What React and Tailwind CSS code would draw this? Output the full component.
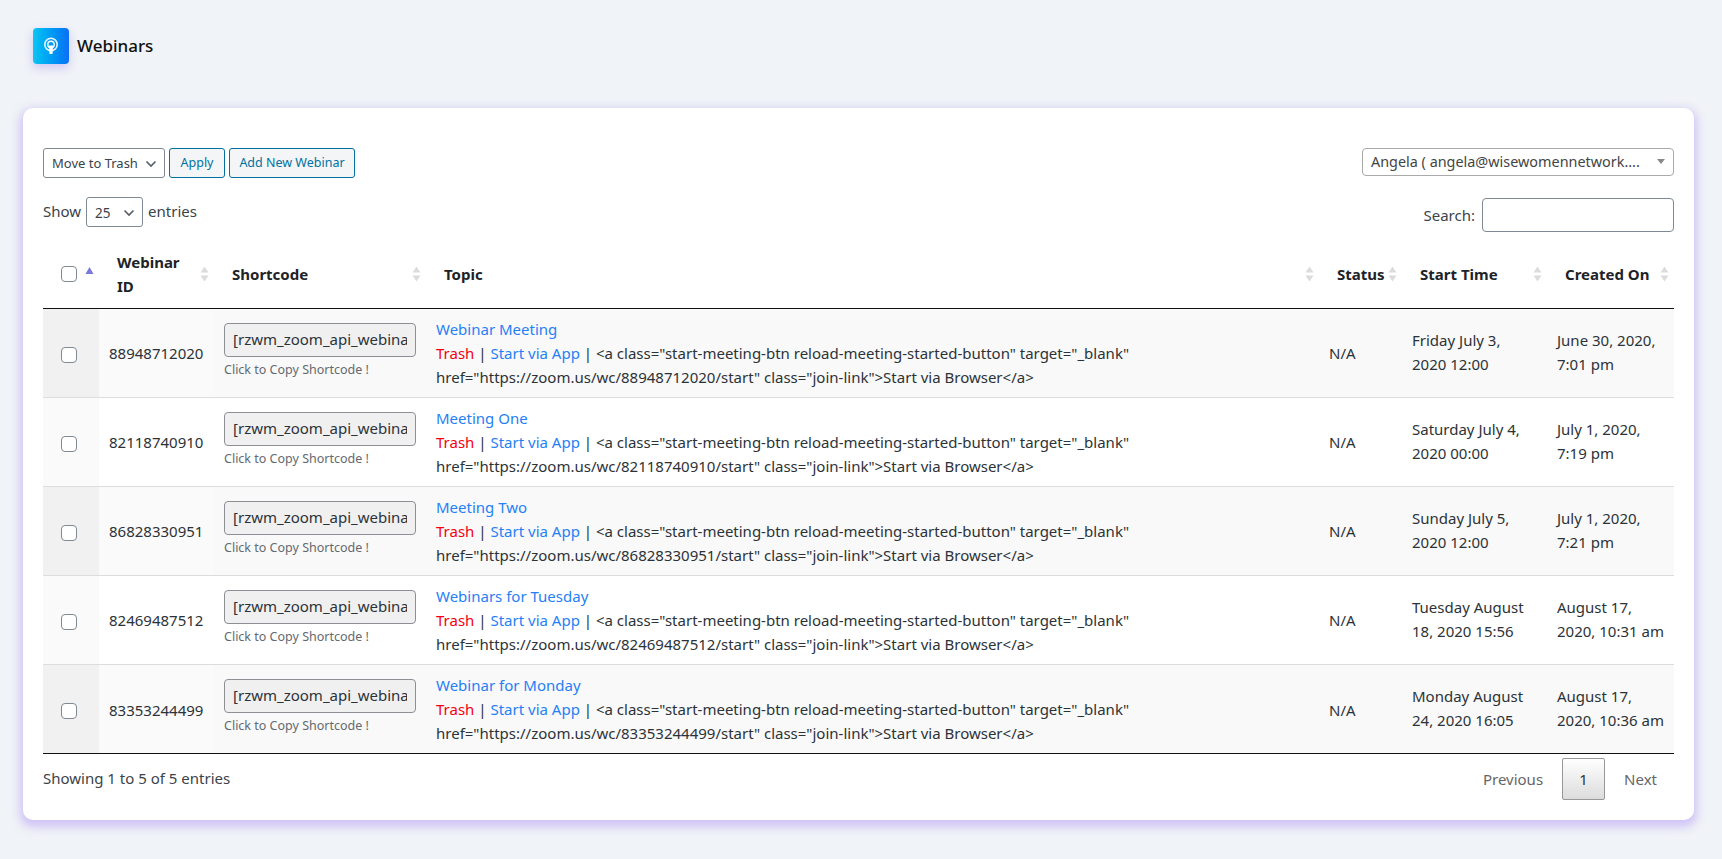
const rows = [
  { id: '88948712020', topic: 'Webinar Meeting', start: 'Friday July 3, 2020 12:00', created: 'June 30, 2020, 7:01 pm' },
  { id: '82118740910', topic: 'Meeting One', start: 'Saturday July 4, 2020 00:00', created: 'July 1, 2020, 7:19 pm' },
  { id: '86828330951', topic: 'Meeting Two', start: 'Sunday July 5, 2020 12:00', created: 'July 1, 2020, 7:21 pm' },
  { id: '82469487512', topic: 'Webinars for Tuesday', start: 'Tuesday August 18, 2020 15:56', created: 'August 17, 2020, 10:31 am' },
  { id: '83353244499', topic: 'Webinar for Monday', start: 'Monday August 24, 2020 16:05', created: 'August 17, 2020, 10:36 am' },
];

function SortArrows() {
  return (
    <svg className="absolute right-[5px] top-1/2 -translate-y-1/2" width="9" height="15" viewBox="0 0 9 15">
      <path d="M4.5 0 L8.5 6 L0.5 6 Z M0.5 9 L8.5 9 L4.5 15 Z" fill="#dcdcdc" />
    </svg>
  );
}

function Checkbox({ className }) {
  return <input type="checkbox" className={`block w-4 h-4 appearance-none bg-white border border-[#7e8993] rounded-[4px] ml-[18px] ${className || ''}`} />;
}

function Chevron({ className }) {
  return (
    <svg className={className} width="12" height="8" viewBox="0 0 12 8" fill="none">
      <path d="M1.5 1.5 L6 6 L10.5 1.5" stroke="#555d66" strokeWidth="1.6" />
    </svg>
  );
}

export default function App() {
  return (
    <div className="min-h-[859px] bg-[#f0f3f7] pt-[28px] text-[15px] text-[#3c434a] font-['Noto_Sans',sans-serif]">
      {/* Page title */}
      <div className="flex items-center gap-2 pl-[33px] h-9">
        <div className="w-9 h-9 rounded-[4px] bg-gradient-to-r from-[#12c5f1] to-[#0f6ff5] shadow-[0_4px_10px_rgba(130,100,240,0.3)] flex items-center justify-center">
          <svg width="16" height="18" viewBox="0 0 16 18" fill="none">
            <circle cx="8" cy="7.5" r="6.2" stroke="#e4f5ff" strokeWidth="1.6" />
            <circle cx="8" cy="7.5" r="3.2" stroke="#ffffff" strokeWidth="1.4" />
            <path d="M6 8.5 H10 L9.5 17 H6.5 Z" fill="#ffffff" />
          </svg>
        </div>
        <h1 className="text-[17px] font-medium text-[#111]">Webinars</h1>
      </div>

      {/* Card */}
      <div className="mx-[23px] mt-[44px] h-[712px] w-[1671px] bg-white rounded-[10px] shadow-[0_4px_10px_3px_rgba(150,110,245,0.35)] px-5 pt-10">
        {/* Bulk actions */}
        <div className="flex items-start justify-between h-[30px] text-[13px]">
          <div className="flex gap-1">
            <div className="relative w-[122px] h-[30px] border border-[#7e8993] rounded-[3px] pl-[8px] pt-px flex items-center">
              Move to Trash
              <Chevron className="absolute right-[7px] top-[11px]" />
            </div>
            <button className="w-[56px] h-[30px] border border-[#0071a1] rounded-[3px] bg-[#f3f5f6] text-[#0071a1] text-[12.5px] pt-px">Apply</button>
            <button className="w-[126px] h-[30px] border border-[#0071a1] rounded-[3px] bg-[#f3f5f6] text-[#0071a1] text-[12.5px] pt-px">Add New Webinar</button>
          </div>
          <div className="relative w-[312px] h-[28px] border border-[#aaa] rounded-[4px] pl-[8px] flex items-center text-[14.4px] text-[#444]">
            Angela ( angela@wisewomennetwork....
            <span className="absolute right-[8px] top-[10px] w-0 h-0 border-x-[4px] border-x-transparent border-t-[5px] border-t-[#888]"></span>
          </div>
        </div>

        {/* Length + search */}
        <div className="flex items-start justify-between mt-5 h-[34px]">
          <div className="flex items-center gap-[5px] h-[30px] -mt-[2px]">
            Show
            <div className="relative w-[57px] h-[30px] mt-[2px] border border-[#7e8993] rounded-[3px] pl-[8px] pt-[2px] flex items-center text-[13.5px]">
              25
              <Chevron className="absolute right-[7px] top-[11px]" />
            </div>
            entries
          </div>
          <div className="flex items-center gap-[7px]">
            Search:
            <input className="w-[192px] h-[34px] bg-white border border-[#7e8993] rounded-[4px]" />
          </div>
        </div>

        {/* Table */}
        <table className="w-[1631px] table-fixed border-collapse mt-[8px]">
          <colgroup>
            <col className="w-[56px]" />
            <col className="w-[115px]" />
            <col className="w-[212px]" />
            <col className="w-[893px]" />
            <col className="w-[83px]" />
            <col className="w-[145px]" />
            <col className="w-[127px]" />
          </colgroup>
          <thead>
            <tr className="h-[68px] border-b border-[#111] text-left text-[15px] text-[#1d2327] leading-[24px]">
              <th className="relative">
                <Checkbox />
                <svg className="absolute right-[5px] top-[27px]" width="9" height="7" viewBox="0 0 9 7">
                  <path d="M4.5 0 L8.5 7 L0.5 7 Z" fill="#7a78d8" />
                </svg>
              </th>
              <th className="relative pl-[18px] pr-[18px] font-bold">Webinar ID<SortArrows /></th>
              <th className="relative pl-[18px] font-bold">Shortcode<SortArrows /></th>
              <th className="relative pl-[18px] font-bold">Topic<SortArrows /></th>
              <th className="relative pl-[18px] font-bold">Status<SortArrows /></th>
              <th className="relative pl-[18px] font-bold">Start Time<SortArrows /></th>
              <th className="relative pl-[18px] font-bold">Created On<SortArrows /></th>
            </tr>
          </thead>
          <tbody>
            {rows.map((r, i) => (
              <tr key={r.id} className={`h-[89px] ${i < 4 ? 'border-b border-[#dddddd]' : ''} ${i % 2 === 0 ? 'bg-[#f9f9f9]' : 'bg-white'}`}>
                <td className={i % 2 === 0 ? 'bg-[#f1f1f1]' : 'bg-[#fafafa]'}><Checkbox className="mt-[5px]" /></td>
                <td className={`pl-[10px] pt-[2px] text-[#2c3338] ${i % 2 === 0 ? 'bg-[#fafafa]' : ''}`}>{r.id}</td>
                <td className="pl-[10px] pr-[10px] align-top pt-[14px]">
                  <div className="w-[192px] h-[34px] bg-[#f0f0f1] border border-[#8c8f94] rounded-[4px] px-[8px] flex items-center text-[#2c3338]">
                    <span className="block overflow-hidden whitespace-nowrap">[rzwm_zoom_api_webinar</span>
                  </div>
                  <div className="text-[12.5px] text-[#646970] mt-[5px] leading-[16px] whitespace-nowrap">Click to Copy Shortcode !</div>
                </td>
                <td className="pl-[10px] leading-[24px]">
                  <div className="text-[#2680f5]">{r.topic}</div>
                  <div className="text-[#2c3338] whitespace-nowrap">
                    <span className="text-[#f5000f]">Trash</span> | <span className="text-[#2680f5]">Start via App</span> | {'<a class="start-meeting-btn reload-meeting-started-button" target="_blank"'}
                  </div>
                  <div className="text-[#2c3338] whitespace-nowrap">{`href="https://zoom.us/wc/${r.id}/start" class="join-link">Start via Browser</a>`}</div>
                </td>
                <td className="pl-[10px] pt-[2px] text-[#2c3338]">N/A</td>
                <td className="pl-[10px] pr-[22px] pb-[2px] text-[#2c3338] leading-[24px]">{r.start}</td>
                <td className="pl-[10px] pr-[6px] pb-[2px] text-[#2c3338] leading-[24px]">{r.created}</td>
              </tr>
            ))}
          </tbody>
        </table>
        <div className="border-t border-[#111]"></div>

        {/* Footer */}
        <div className="flex items-start justify-between pt-[4px]">
          <div className="mt-[9px]">Showing 1 to 5 of 5 entries</div>
          <div className="flex items-center">
            <span className="text-[#666] mr-[19px]">Previous</span>
            <span className="w-[43px] h-[42px] border border-[#979797] rounded-[2px] bg-gradient-to-b from-white to-[#dcdcdc] flex items-center justify-center text-[#333]">1</span>
            <span className="text-[#666] ml-[19px] mr-[17px]">Next</span>
          </div>
        </div>
      </div>
    </div>
  );
}
